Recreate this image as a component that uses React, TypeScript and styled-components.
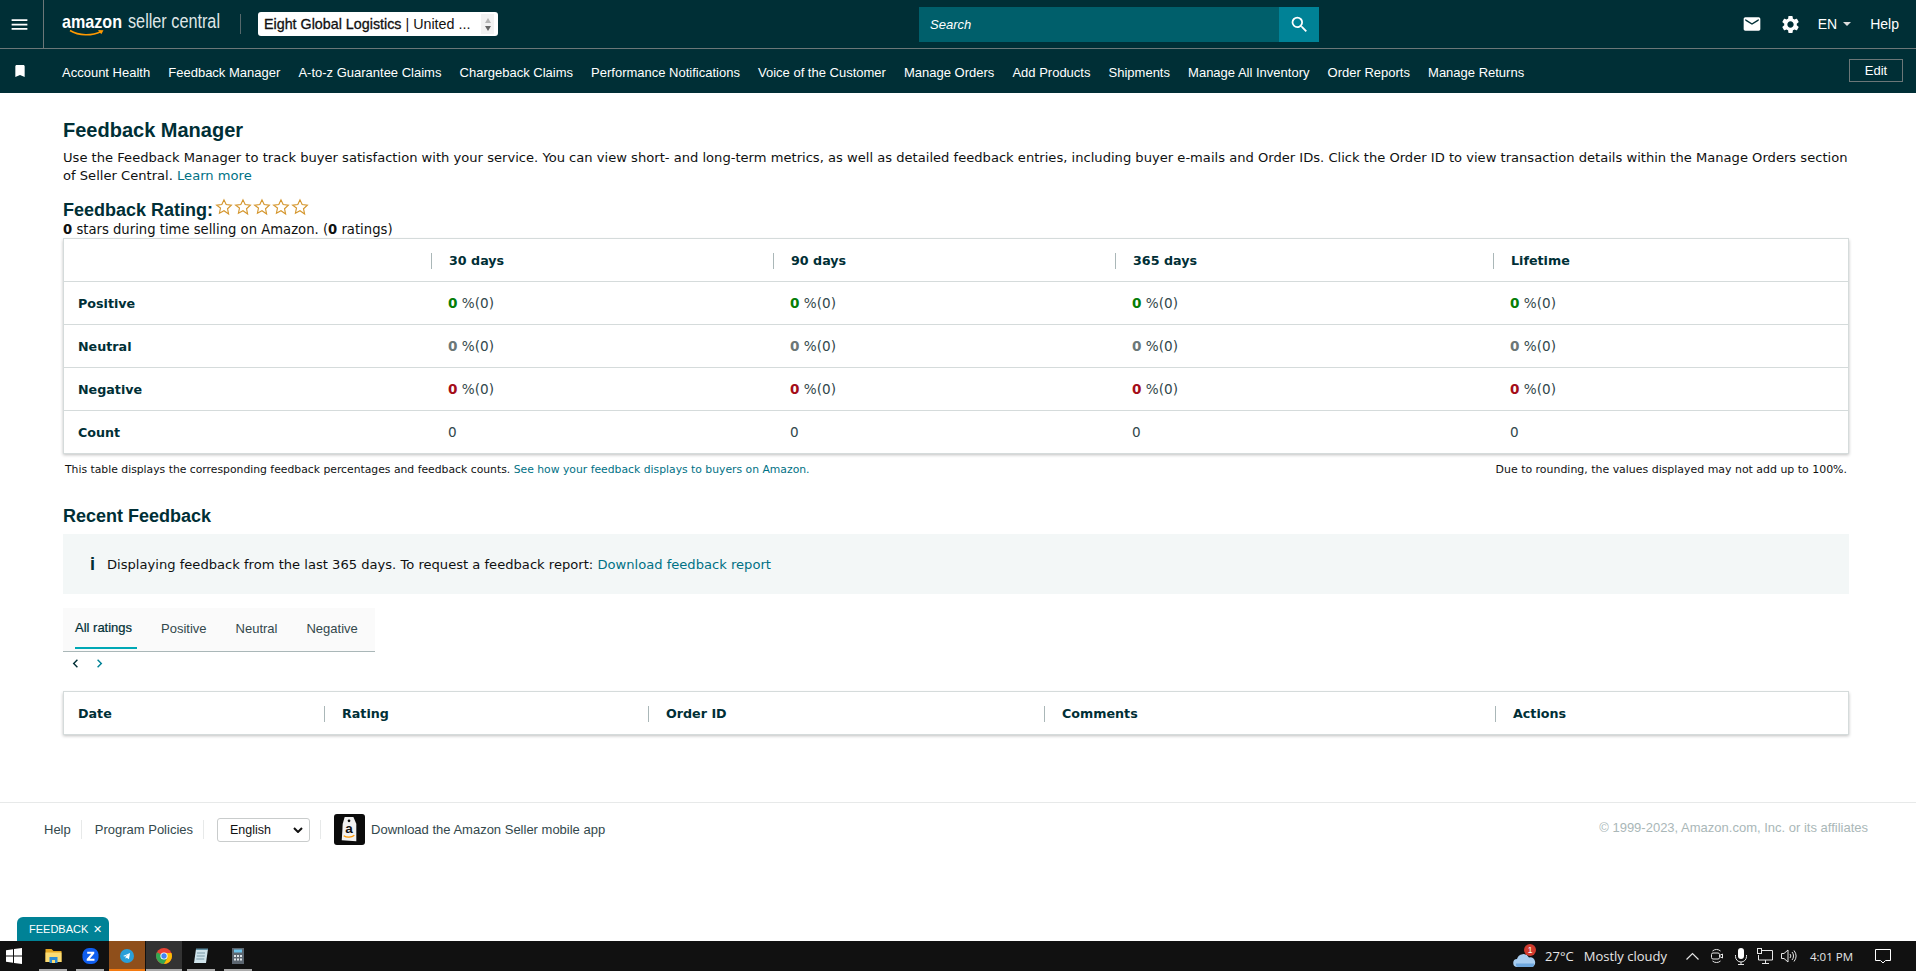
import React from "react"
import styled, { createGlobalStyle } from "styled-components"
import { MdMenu, MdEmail, MdSettings, MdSearch, MdBookmark, MdChevronLeft, MdChevronRight } from "react-icons/md"

const navLinks = [
	"Account Health",
	"Feedback Manager",
	"A-to-z Guarantee Claims",
	"Chargeback Claims",
	"Performance Notifications",
	"Voice of the Customer",
	"Manage Orders",
	"Add Products",
	"Shipments",
	"Manage All Inventory",
	"Order Reports",
	"Manage Returns",
]

const ratingRows = [
	{ label: "Positive", color: "#067d06" },
	{ label: "Neutral", color: "#6c7778" },
	{ label: "Negative", color: "#a50d19" },
]

const GlobalStyle = createGlobalStyle`
	html, body {
		margin: 0;
		padding: 0;
		background: #fff;
	}
	body {
		font-family: "DejaVu Sans", sans-serif;
		color: #002f36;
		overflow: hidden;
	}
	* {
		box-sizing: border-box;
	}
`
const Page = styled.div`
	width: 1916px;
	height: 971px;
	display: flex;
	flex-direction: column;
	position: relative;
`
const TopBar = styled.header`
	height: 49px;
	background: #002f36;
	display: flex;
	align-items: center;
	color: #fff;
	font-family: "Liberation Sans", Arial, sans-serif;
	border-bottom: 1px solid #6c7778;
`
const MenuCell = styled.div`
	width: 44px;
	height: 48px;
	border-right: 1px solid #6c7778;
	margin-right: 18px;
	padding-left: 9px;
	display: flex;
	align-items: center;
`
const LogoBlock = styled.div`
	width: 160px;
	height: 36px;
	flex: none;
`
const Divider = styled.div`
	width: 1px;
	height: 20px;
	background: #56686b;
	margin: 0 17px 0 18px;
`
const AccountSwitcher = styled.div`
	width: 240px;
	height: 24px;
	background: #fff;
	border-radius: 3px;
	color: #111;
	font-size: 14.3px;
	display: flex;
	align-items: center;
	padding-left: 6px;
	justify-content: space-between;
	white-space: nowrap;
	b {
		font-weight: 400;
		-webkit-text-stroke: 0.3px #111;
	}
`
const Spinner = styled.span`
	width: 13px;
	height: 20px;
	margin-right: 4px;
	background: #f2f2f2;
	display: flex;
	flex-direction: column;
	align-items: center;
	justify-content: center;
	gap: 3px;
`
const Tri = styled.i<{ $up?: boolean }>`
	width: 0;
	height: 0;
	border-left: 3.5px solid transparent;
	border-right: 3.5px solid transparent;
	${({ $up }) => ($up ? "border-bottom: 5px solid #b5b5b5;" : "border-top: 5px solid #666;")}
`
const SearchWrap = styled.div`
	display: flex;
	height: 35px;
	margin-left: 421px;
`
const SearchField = styled.div`
	width: 360px;
	background: #005f6b;
	font-style: italic;
	font-size: 13px;
	color: #fff;
	padding-left: 11px;
	display: flex;
	align-items: center;
`
const SearchButton = styled.div`
	width: 40px;
	background: #008296;
	display: flex;
	align-items: center;
	justify-content: center;
`
const TopRight = styled.div`
	margin-left: auto;
	display: flex;
	align-items: center;
	font-size: 14px;
	padding-right: 17px;
`
const LangCaret = styled.span`
	width: 0;
	height: 0;
	border-left: 4.5px solid transparent;
	border-right: 4.5px solid transparent;
	border-top: 4.5px solid #ddd;
	margin: 0 19px 0 6px;
`
const IconSlot = styled.span<{ $mr: number }>`
	display: flex;
	margin-right: ${({ $mr }) => $mr}px;
`
const NavBar = styled.nav`
	height: 44px;
	background: #002f36;
	display: flex;
	align-items: center;
	color: #fff;
	font-family: "Liberation Sans", Arial, sans-serif;
	font-size: 13px;
	padding: 2px 0 0 12px;
`
const BookmarkSlot = styled.span`
	width: 50px;
	display: flex;
	margin-top: -2px;
`
const NavLink = styled.a`
	margin-right: 18.1px;
	white-space: nowrap;
`
const EditButton = styled.div`
	margin-left: auto;
	margin-right: 13px;
	margin-top: -3px;
	width: 54px;
	height: 23px;
	border: 1px solid #6c7778;
	display: flex;
	align-items: center;
	justify-content: center;
`
const Main = styled.main`
	padding: 23px 67px 0 63px;
`
const PageTitle = styled.h1`
	margin: 0;
	font-family: "Liberation Sans", Arial, sans-serif;
	font-size: 20px;
	line-height: 28px;
	font-weight: 700;
`
const Intro = styled.p`
	margin: 5px 0 0;
	font-size: 13.1px;
	line-height: 18px;
	color: #0f1111;
`
const Link = styled.a`
	color: #007185;
`
const RatingHeading = styled.div`
	margin-top: 13px;
	display: flex;
	align-items: flex-start;
	height: 21px;
`
const RatingTitle = styled.span`
	font-family: "Liberation Sans", Arial, sans-serif;
	font-size: 18px;
	line-height: 24px;
	font-weight: 700;
	margin-right: 2px;
`
const Stars = styled.span`
	display: flex;
	gap: 1px;
`
const RatingSummary = styled.div`
	font-size: 13.2px;
	line-height: 16px;
	margin-top: 3px;
	color: #0f1111;
`
const TableCard = styled.div`
	border: 1px solid #d5dbdb;
	border-bottom: 0;
	box-shadow: 0 1px 0 #d5dbdb, 0 2px 3px rgba(0, 0, 0, 0.25);
	background: #fff;
`
const Row = styled.div<{ $cols: string; $head?: boolean }>`
	display: grid;
	grid-template-columns: ${({ $cols }) => $cols};
	height: ${({ $head }) => ($head ? 42 : 43)}px;
	align-items: center;
	font-size: 12.7px;
	${({ $head }) => ($head ? "" : "border-top: 1px solid #d5dbdb;")}
`
const HeadCell = styled.div<{ $rule?: boolean }>`
	font-weight: 700;
	padding-left: ${({ $rule }) => ($rule ? 17 : 14)}px;
	margin-top: 1px;
	height: 16px;
	line-height: 16px;
	${({ $rule }) => ($rule ? "border-left: 1px solid #aab7b8;" : "")}
`
const LabelCell = styled.div`
	font-weight: 700;
	padding-left: 14px;
`
const ValueCell = styled.div`
	padding-left: 17px;
	font-size: 13.6px;
	color: #33484c;
`
const Score = styled.b<{ $color: string }>`
	color: ${({ $color }) => $color};
`
const Notes = styled.div`
	display: flex;
	justify-content: space-between;
	font-size: 10.8px;
	line-height: 14px;
	padding: 10px 2px 0;
	color: #0f1111;
`
const RoundingNote = styled.span`
	font-size: 10.95px;
`
const SectionTitle = styled.h2`
	margin: 27px 0 0;
	font-family: "Liberation Sans", Arial, sans-serif;
	font-size: 18px;
	line-height: 24px;
	font-weight: 700;
`
const InfoBanner = styled.div`
	margin-top: 6px;
	height: 60px;
	background: #f3f7f7;
	display: flex;
	align-items: center;
	padding-left: 27px;
	font-size: 13.1px;
	color: #0f1111;
`
const InfoMark = styled.span`
	font-family: "Liberation Sans", Arial, sans-serif;
	font-weight: 700;
	font-size: 18px;
	margin-right: 12px;
	color: #002f36;
`
const TabStrip = styled.div`
	margin-top: 14px;
	width: 312px;
	height: 44px;
	background: #fafafa;
	border-bottom: 1px solid #aab7b8;
	padding-left: 12px;
	display: flex;
	font-family: "Liberation Sans", Arial, sans-serif;
	font-size: 13px;
`
const Tab = styled.div<{ $active?: boolean }>`
	flex: none;
	width: ${({ $active }) => ($active ? "62px" : "auto")};
	margin-right: ${({ $active }) => ($active ? 24 : 29)}px;
	height: 41px;
	display: flex;
	align-items: center;
	white-space: nowrap;
	color: ${({ $active }) => ($active ? "#002f36" : "#33484c")};
	${({ $active }) => ($active ? "border-bottom: 2px solid #00a8b5; -webkit-text-stroke: 0.2px #002f36;" : "")}
	&:last-child {
		margin-right: 0;
	}
`
const Arrows = styled.div`
	display: flex;
	gap: 7px;
	height: 22px;
	align-items: center;
	padding-left: 4px;
`
const FeedbackCard = styled(TableCard)`
	margin-top: 17px;
`
const Footer = styled.footer`
	margin-top: 68px;
	border-top: 1px solid #e7e9e9;
	padding: 11px 48px 0 44px;
	display: flex;
	align-items: center;
	height: 43px;
	font-family: "Liberation Sans", Arial, sans-serif;
	font-size: 13px;
	color: #33484c;
`
const FootItem = styled.span`
	height: 19px;
	display: flex;
	align-items: center;
	padding-right: 10px;
	margin-right: 13px;
	border-right: 1px solid #e7e9e9;
`
const LangSelect = styled.div`
	width: 93px;
	height: 24px;
	border: 1px solid #c9cccc;
	border-radius: 3px;
	padding: 0 6px 0 12px;
	display: flex;
	align-items: center;
	justify-content: space-between;
	color: #111;
	font-size: 12.5px;
`
const AppBadge = styled.span`
	width: 31px;
	height: 31px;
	margin-right: 6px;
	flex: none;
	display: flex;
`
const Copyright = styled.span`
	margin-left: auto;
	margin-top: -4px;
	color: #aab7b8;
	font-size: 13px;
`
const FeedbackTab = styled.div`
	position: absolute;
	left: 17px;
	bottom: 30px;
	width: 92px;
	height: 24px;
	background: #008296;
	border-radius: 6px 6px 0 0;
	color: #fff;
	font-family: "Liberation Sans", Arial, sans-serif;
	font-size: 11px;
	padding-left: 12px;
	display: flex;
	align-items: center;
	gap: 5px;
`
const Taskbar = styled.div`
	position: absolute;
	left: 0;
	right: 0;
	bottom: 0;
	height: 30px;
	background: #111;
	display: flex;
	align-items: stretch;
	color: #e6e6e6;
	font-family: "Open Sans", "Noto Sans", sans-serif;
	font-size: 13px;
`
const StartButton = styled.div`
	width: 35px;
	padding-left: 6px;
	display: flex;
	align-items: center;
`
const TaskButton = styled.div<{ $state: "flagged" | "active" | "open" }>`
	width: 37px;
	position: relative;
	display: flex;
	align-items: center;
	justify-content: center;
	background: ${({ $state }) => ($state === "flagged" ? "#8f4f1b" : $state === "active" ? "#333" : "transparent")};
	border-right: 1px solid #111;
	&::after {
		content: "";
		position: absolute;
		bottom: 0;
		height: 2px;
		left: ${({ $state }) => ($state === "open" ? 4 : 0)}px;
		right: ${({ $state }) => ($state === "open" ? 4 : 0)}px;
		background: ${({ $state }) => ($state === "flagged" ? "#f47a10" : "#a9a9a9")};
	}
`
const Tray = styled.div`
	margin-left: auto;
	display: flex;
	align-items: center;
	padding-right: 25px;
`
const TrayText = styled.span<{ $mr: number; $small?: boolean }>`
	margin-right: ${({ $mr }) => $mr}px;
	white-space: nowrap;
	font-size: ${({ $small }) => ($small ? 11.5 : 13)}px;
`

const AmazonLogo = () => (
	<svg width="190" height="36" viewBox="0 0 190 36">
		<text
			x="0"
			y="22"
			fontFamily="Liberation Sans, Arial, sans-serif"
			fontSize="19"
			fontWeight="700"
			fill="#fff"
			textLength="60"
			lengthAdjust="spacingAndGlyphs"
		>
			amazon
		</text>
		<text
			x="66"
			y="22"
			fontFamily="Liberation Sans, Arial, sans-serif"
			fontSize="20"
			fill="#dfe6e6"
			textLength="92"
			lengthAdjust="spacingAndGlyphs"
		>
			seller central
		</text>
		<path d="M8 24.5c9 5.5 22 5.5 31 1" stroke="#f90" strokeWidth="1.6" fill="none" />
		<path d="M36 24l5.5 0.2-2.2 4" fill="#f90" />
	</svg>
)

const Star = () => (
	<svg width="18" height="18" viewBox="0 0 24 24" fill="none" stroke="#d4952b" strokeWidth="1.5">
		<path d="M12 2.5l2.9 6.3 6.9 0.8-5.1 4.7 1.4 6.9L12 16.9 5.9 20.3l1.4-6.9L2.2 9.6l6.9-0.8z" />
	</svg>
)

const AmazonBadge = () => (
	<svg width="31" height="31" viewBox="0 0 32 32">
		<rect width="32" height="32" rx="3" fill="#0b0b0b" />
		<path d="M11 3h9l3 7v18l-15-1 1-17z" fill="#f2f2f2" />
		<circle cx="15.5" cy="7" r="1.4" fill="#0b0b0b" />
		<text x="15.5" y="20" textAnchor="middle" fontFamily="Liberation Sans, Arial, sans-serif" fontWeight="700" fontSize="14" fill="#111">
			a
		</text>
		<path d="M10 22.5c3 2 8 2 11-.5" stroke="#f90" strokeWidth="1.4" fill="none" />
	</svg>
)

const WindowsLogo = () => (
	<svg width="16" height="16" viewBox="0 0 16 16" fill="#fff">
		<path d="M0 2.3l7-1v6.2H0zM8 1.1L16 0v7.5H8zM0 8.5h7v6.2l-7-1zM8 8.5h8V16l-8-1.1z" />
	</svg>
)

const FolderIcon = () => (
	<svg width="17" height="16" viewBox="0 0 16 16">
		<path d="M0 1h6l2 2h8v11H0z" fill="#e5a823" />
		<rect x="0" y="4.5" width="16" height="9.5" fill="#fbdc74" />
		<rect x="4" y="9" width="8" height="6" fill="#2c8bd6" />
		<rect x="6.5" y="12" width="3" height="3" fill="#fbdc74" />
	</svg>
)

const ZaloIcon = () => (
	<svg width="17" height="18" viewBox="0 0 18 18">
		<rect x="0.5" y="0.5" width="17" height="17" rx="7" fill="#0f5ef0" />
		<path d="M5.5 4.5h7.5v1.8L8.3 12h4.9v2H5v-1.8L9.8 6.5H5.5z" fill="#fff" />
	</svg>
)

const TelegramIcon = () => (
	<svg width="14" height="14" viewBox="0 0 16 16">
		<circle cx="8" cy="8" r="8" fill="#2a9fd9" />
		<path d="M3.5 8l8-3.4-1.3 7.2-2.5-1.9-1.2 1.2-.2-2.3 3.4-2.7-4.2 2.4z" fill="#fff" />
	</svg>
)

const ChromeIcon = () => (
	<svg width="16" height="16" viewBox="0 0 16 16">
		<circle cx="8" cy="8" r="8" fill="#ea4335" />
		<path d="M8 8L1 4.2A8 8 0 0 0 8 16l3.5-6z" fill="#34a853" />
		<path d="M8 5h7.4A8 8 0 0 1 8 16l3.4-6z" fill="#fbbc05" />
		<circle cx="8" cy="8" r="3.6" fill="#fff" />
		<circle cx="8" cy="8" r="2.7" fill="#4285f4" />
	</svg>
)

const NotepadIcon = () => (
	<svg width="16" height="16" viewBox="0 0 16 16">
		<path d="M3 1h12l-2 14H1z" fill="#cfe3ea" />
		<path d="M3 0.5h12v1.5H3z" fill="#5f8ea3" />
		<path d="M4 5h8M3.7 8h8M3.3 11h8" stroke="#7a9aa8" strokeWidth="1" />
	</svg>
)

const CalculatorIcon = () => (
	<svg width="12" height="16" viewBox="0 0 12 16">
		<rect width="12" height="16" fill="#5c6670" />
		<rect x="2" y="1.5" width="8" height="3" fill="#6fc3ea" />
		<path d="M2 7h2v2H2zM5 7h2v2H5zM8 7h2v2H8zM2 10.5h2v2H2zM5 10.5h2v2H5zM8 10.5h2v2H8z" fill="#dfe5ea" />
	</svg>
)

const WeatherIcon = () => (
	<svg width="24" height="24" viewBox="0 0 24 24">
		<path d="M4.5 23a4 4 0 0 1-.5-8 6.5 6.5 0 0 1 12-1.5A5 5 0 0 1 19 23z" fill="#a8cdf0" />
		<path d="M3 19.5h18v1.5a2 2 0 0 1-2 2H4.5A3 3 0 0 1 3 19.5z" fill="#6fa8de" />
		<circle cx="17" cy="6" r="6" fill="#d13b2e" />
		<text x="17" y="9" textAnchor="middle" fontSize="8.5" fill="#fff" fontFamily="Liberation Sans, Arial, sans-serif">
			1
		</text>
	</svg>
)

const CaretUpIcon = () => (
	<svg width="13" height="8" viewBox="0 0 13 8" fill="none" stroke="#e6e6e6" strokeWidth="1.2">
		<path d="M0.5 7.5l6-6 6 6" />
	</svg>
)

const CameraIcon = () => (
	<svg width="12" height="16" viewBox="0 0 12 16" fill="none" stroke="#e6e6e6" strokeWidth="1">
		<path d="M1.5 3a6 6 0 0 1 8 0M1.5 13a6 6 0 0 0 8 0" />
		<rect x="0.5" y="5" width="8" height="6" rx="1.5" />
		<path d="M8.5 7.5l3-1.5v4l-3-1.5" />
	</svg>
)

const MicIcon = () => (
	<svg width="12" height="17" viewBox="0 0 12 17" fill="none" stroke="#e6e6e6" strokeWidth="1">
		<rect x="3" y="0" width="6" height="11" rx="3" fill="#fff" stroke="none" />
		<path d="M0.5 7v1.5a5.5 5.5 0 0 0 11 0V7M6 14v3M3 16.5h6" />
	</svg>
)

const NetworkIcon = () => (
	<svg width="16" height="16" viewBox="0 0 16 16" fill="none" stroke="#e6e6e6" strokeWidth="1">
		<path d="M4.5 2.5H15.5V12H1.5V7" />
		<rect x="0.5" y="0.5" width="4" height="5" />
		<path d="M8.5 12v3M5 15.5h7" />
	</svg>
)

const SpeakerIcon = () => (
	<svg width="16" height="14" viewBox="0 0 16 14" fill="none" stroke="#e6e6e6" strokeWidth="1">
		<path d="M0.5 4.5h2.5L7 1v12L3 9.5H0.5z" />
		<path d="M9 5a3 3 0 0 1 0 4M11 3a6 6 0 0 1 0 8M13 1.5a9 9 0 0 1 0 11" />
	</svg>
)

const ActionCenterIcon = () => (
	<svg width="16" height="15" viewBox="0 0 16 15" fill="none" stroke="#fff" strokeWidth="1">
		<path d="M0.5 0.5h15v11h-5L8 14l-2.5-2.5h-5z" />
	</svg>
)

const summaryCols = "367px 342px 342px 378px 1fr"
const feedbackCols = "260px 324px 396px 451px 1fr"

export default function App() {
	return (
		<Page>
			<GlobalStyle />
			<TopBar>
				<MenuCell>
					<MdMenu size={21} color="#fff" />
				</MenuCell>
				<LogoBlock>
					<AmazonLogo />
				</LogoBlock>
				<Divider />
				<AccountSwitcher>
					<span>
						<b>Eight Global Logistics</b> | United ...
					</span>
					<Spinner>
						<Tri $up />
						<Tri />
					</Spinner>
				</AccountSwitcher>
				<SearchWrap>
					<SearchField>Search</SearchField>
					<SearchButton>
						<MdSearch size={21} color="#fff" />
					</SearchButton>
				</SearchWrap>
				<TopRight>
					<IconSlot $mr={18}>
						<MdEmail size={20} color="#fff" />
					</IconSlot>
					<IconSlot $mr={17}>
						<MdSettings size={21} color="#fff" />
					</IconSlot>
					<span>EN</span>
					<LangCaret />
					<span>Help</span>
				</TopRight>
			</TopBar>
			<NavBar>
				<BookmarkSlot>
					<MdBookmark size={16} color="#fff" />
				</BookmarkSlot>
				{navLinks.map((link) => (
					<NavLink key={link}>{link}</NavLink>
				))}
				<EditButton>Edit</EditButton>
			</NavBar>
			<Main>
				<PageTitle>Feedback Manager</PageTitle>
				<Intro>
					Use the Feedback Manager to track buyer satisfaction with your service. You can view short- and long-term
					metrics, as well as detailed feedback entries, including buyer e-mails and Order IDs. Click the Order ID to view
					transaction details within the Manage Orders section of Seller Central. <Link>Learn more</Link>
				</Intro>
				<RatingHeading>
					<RatingTitle>Feedback Rating:</RatingTitle>
					<Stars>
						{[0, 1, 2, 3, 4].map((i) => (
							<Star key={i} />
						))}
					</Stars>
				</RatingHeading>
				<RatingSummary>
					<b>0</b> stars during time selling on Amazon. (<b>0</b> ratings)
				</RatingSummary>
				<TableCard>
					<Row $cols={summaryCols} $head>
						<HeadCell />
						<HeadCell $rule>30 days</HeadCell>
						<HeadCell $rule>90 days</HeadCell>
						<HeadCell $rule>365 days</HeadCell>
						<HeadCell $rule>Lifetime</HeadCell>
					</Row>
					{ratingRows.map((row) => (
						<Row $cols={summaryCols} key={row.label}>
							<LabelCell>{row.label}</LabelCell>
							{[0, 1, 2, 3].map((i) => (
								<ValueCell key={i}>
									<Score $color={row.color}>0</Score> %(0)
								</ValueCell>
							))}
						</Row>
					))}
					<Row $cols={summaryCols}>
						<LabelCell>Count</LabelCell>
						{[0, 1, 2, 3].map((i) => (
							<ValueCell key={i}>0</ValueCell>
						))}
					</Row>
				</TableCard>
				<Notes>
					<span>
						This table displays the corresponding feedback percentages and feedback counts.{" "}
						<Link>See how your feedback displays to buyers on Amazon.</Link>
					</span>
					<RoundingNote>Due to rounding, the values displayed may not add up to 100%.</RoundingNote>
				</Notes>
				<SectionTitle>Recent Feedback</SectionTitle>
				<InfoBanner>
					<InfoMark>i</InfoMark>
					<span>
						Displaying feedback from the last 365 days. To request a feedback report: <Link>Download feedback report</Link>
					</span>
				</InfoBanner>
				<TabStrip>
					<Tab $active>All ratings</Tab>
					<Tab>Positive</Tab>
					<Tab>Neutral</Tab>
					<Tab>Negative</Tab>
				</TabStrip>
				<Arrows>
					<MdChevronLeft size={17} color="#002f36" />
					<MdChevronRight size={17} color="#008296" />
				</Arrows>
				<FeedbackCard>
					<Row $cols={feedbackCols} $head>
						<HeadCell>Date</HeadCell>
						<HeadCell $rule>Rating</HeadCell>
						<HeadCell $rule>Order ID</HeadCell>
						<HeadCell $rule>Comments</HeadCell>
						<HeadCell $rule>Actions</HeadCell>
					</Row>
				</FeedbackCard>
			</Main>
			<Footer>
				<FootItem>Help</FootItem>
				<FootItem>Program Policies</FootItem>
				<FootItem>
					<LangSelect>
						English
						<svg width="10" height="6" viewBox="0 0 10 6" fill="none" stroke="#111" strokeWidth="2">
							<path d="M1 1l4 4 4-4" />
						</svg>
					</LangSelect>
				</FootItem>
				<AppBadge>
					<AmazonBadge />
				</AppBadge>
				<span>Download the Amazon Seller mobile app</span>
				<Copyright>© 1999-2023, Amazon.com, Inc. or its affiliates</Copyright>
			</Footer>
			<FeedbackTab>
				FEEDBACK <span>✕</span>
			</FeedbackTab>
			<Taskbar>
				<StartButton>
					<WindowsLogo />
				</StartButton>
				<TaskButton $state="open">
					<FolderIcon />
				</TaskButton>
				<TaskButton $state="open">
					<ZaloIcon />
				</TaskButton>
				<TaskButton $state="flagged">
					<TelegramIcon />
				</TaskButton>
				<TaskButton $state="active">
					<ChromeIcon />
				</TaskButton>
				<TaskButton $state="open">
					<NotepadIcon />
				</TaskButton>
				<TaskButton $state="open">
					<CalculatorIcon />
				</TaskButton>
				<Tray>
					<IconSlot $mr={8}>
						<WeatherIcon />
					</IconSlot>
					<TrayText $mr={10}>27°C</TrayText>
					<TrayText $mr={19}>Mostly cloudy</TrayText>
					<IconSlot $mr={12}>
						<CaretUpIcon />
					</IconSlot>
					<IconSlot $mr={12}>
						<CameraIcon />
					</IconSlot>
					<IconSlot $mr={10}>
						<MicIcon />
					</IconSlot>
					<IconSlot $mr={8}>
						<NetworkIcon />
					</IconSlot>
					<IconSlot $mr={13}>
						<SpeakerIcon />
					</IconSlot>
					<TrayText $mr={22} $small>
						4:01 PM
					</TrayText>
					<ActionCenterIcon />
				</Tray>
			</Taskbar>
		</Page>
	)
}
